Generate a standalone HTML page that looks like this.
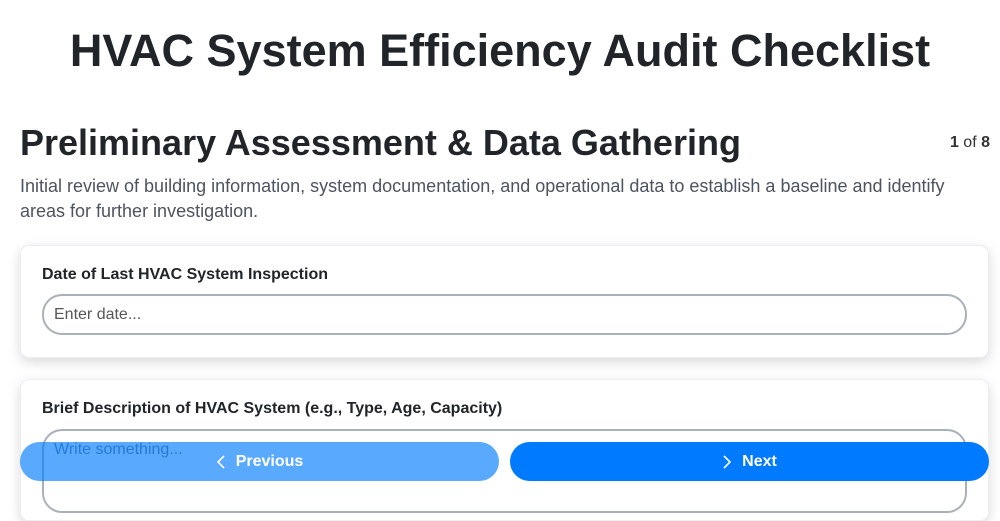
<!DOCTYPE html>
<html><head><style>
body{margin:0;width:1000px;height:500px;overflow:hidden;background:#fff;font-family:"Liberation Sans",sans-serif;color:#212529;position:relative}
h1{position:absolute;top:25px;left:0;width:1000px;margin:0;text-align:center;font-size:45px;font-weight:bold;line-height:52px}
h2{position:absolute;top:121px;left:20px;margin:0;font-size:36px;line-height:44px;font-weight:bold}
.pg{position:absolute;top:134px;right:10px;font-size:16px;color:#333}
.desc{position:absolute;top:174px;left:20px;width:950px;font-size:18px;line-height:25px;color:#4d5360}
.card{position:absolute;left:20px;width:967px;background:#fff;border:1px solid #eceef2;border-radius:9px;box-shadow:0 4px 12px rgba(0,0,0,.15)}
.lbl{position:absolute;left:21px;font-size:16px;font-weight:bold;color:#212529}
.inp{position:absolute;left:21px;width:921px;height:37px;border:2px solid #a9b0b8;border-radius:20px;font-size:16px;color:#555;box-sizing:content-box}
.inp span{position:absolute;left:10px;top:10px}
.btn{position:absolute;top:442px;height:39px;border-radius:20px;color:#fff;font-weight:bold;font-size:16px;display:flex;align-items:center;justify-content:center}
.btn svg{margin-right:10px}
</style></head><body>
<h1>HVAC System Efficiency Audit Checklist</h1>
<h2>Preliminary Assessment &amp; Data Gathering</h2>
<div class="pg"><b>1</b> of <b>8</b></div>
<div class="desc">Initial review of building information, system documentation, and operational data to establish a baseline and identify areas for further investigation.</div>
<div class="card" style="top:245px;height:111px">
<div class="lbl" style="top:20px">Date of Last HVAC System Inspection</div>
<div class="inp" style="top:48px"><span>Enter date...</span></div>
</div>
<div class="card" style="top:379px;height:140px">
<div class="lbl" style="top:20px">Brief Description of HVAC System (e.g., Type, Age, Capacity)</div>
<div class="inp" style="top:49px;height:80px;border-radius:20px"><span style="color:#6c7a88">Write something...</span></div>
</div>
<div class="btn" style="left:20px;width:479px;background:rgba(0,123,255,.65)"><svg width="10" height="16" viewBox="0 0 10 16"><path d="M8 2L2 8l6 6" stroke="#fff" stroke-width="1.6" fill="none"/></svg>Previous</div>
<div class="btn" style="left:510px;width:479px;background:#007bff"><svg width="10" height="16" viewBox="0 0 10 16"><path d="M2 2l6 6-6 6" stroke="#fff" stroke-width="1.6" fill="none"/></svg>Next</div>
</body></html>
